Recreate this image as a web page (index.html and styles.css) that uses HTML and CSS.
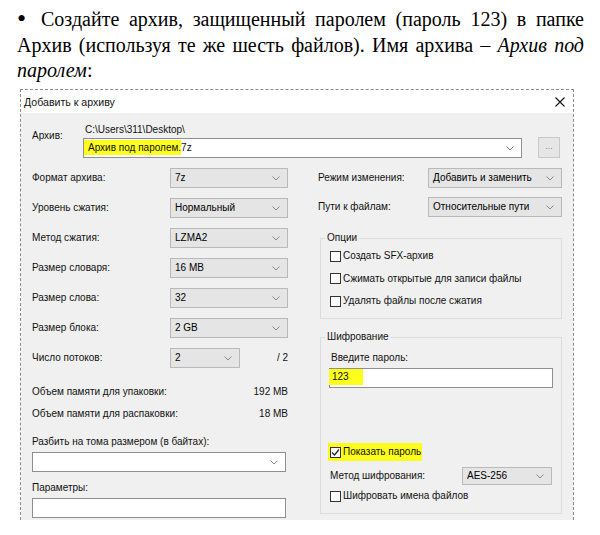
FILE: index.html
```html
<!DOCTYPE html>
<html lang="ru">
<head>
<meta charset="utf-8">
<link rel="stylesheet" href="styles.css">
</head>
<body>
<div class="task">
  <p class="task-text"><span class="bullet">•</span>Создайте архив, защищенный паролем (пароль 123) в папке Архив (используя те же шесть файлов). Имя архива – <i>Архив под паролем</i>:</p>
</div>
<div class="dialog">
  <div class="titlebar">
    <span class="title">Добавить к архиву</span>
    <svg class="close" width="10" height="10" viewBox="0 0 10 10"><path d="M0.5 0.5 L9.5 9.5 M9.5 0.5 L0.5 9.5" stroke="#111" stroke-width="1.1" fill="none"/></svg>
  </div>
  <div class="dlg-body">
    <div class="archive-row">
      <span class="lbl archive-lbl">Архив:</span>
      <div class="archive-field">
        <div class="path">C:\Users\311\Desktop\</div>
        <div class="combo">
          <span class="val"><span class="hl">Архив под паролем.</span>7z</span>
          <svg class="chev" width="8" height="5" viewBox="0 0 8 5"><path d="M0.5 0.5 L4 4 L7.5 0.5" stroke="#777" fill="none"/></svg>
        </div>
      </div>
      <div class="browse">...</div>
    </div>

    <div class="columns">
      <div class="col-left">
        <div class="row"><span class="lbl rl">Формат архива:</span><div class="select"><span class="val">7z</span><svg class="chev" width="8" height="5" viewBox="0 0 8 5"><path d="M0.5 0.5 L4 4 L7.5 0.5" stroke="#888" fill="none"/></svg></div></div>
        <div class="row"><span class="lbl rl">Уровень сжатия:</span><div class="select"><span class="val">Нормальный</span><svg class="chev" width="8" height="5" viewBox="0 0 8 5"><path d="M0.5 0.5 L4 4 L7.5 0.5" stroke="#888" fill="none"/></svg></div></div>
        <div class="row"><span class="lbl rl">Метод сжатия:</span><div class="select"><span class="val">LZMA2</span><svg class="chev" width="8" height="5" viewBox="0 0 8 5"><path d="M0.5 0.5 L4 4 L7.5 0.5" stroke="#888" fill="none"/></svg></div></div>
        <div class="row"><span class="lbl rl">Размер словаря:</span><div class="select"><span class="val">16 MB</span><svg class="chev" width="8" height="5" viewBox="0 0 8 5"><path d="M0.5 0.5 L4 4 L7.5 0.5" stroke="#888" fill="none"/></svg></div></div>
        <div class="row"><span class="lbl rl">Размер слова:</span><div class="select"><span class="val">32</span><svg class="chev" width="8" height="5" viewBox="0 0 8 5"><path d="M0.5 0.5 L4 4 L7.5 0.5" stroke="#888" fill="none"/></svg></div></div>
        <div class="row"><span class="lbl rl">Размер блока:</span><div class="select"><span class="val">2 GB</span><svg class="chev" width="8" height="5" viewBox="0 0 8 5"><path d="M0.5 0.5 L4 4 L7.5 0.5" stroke="#888" fill="none"/></svg></div></div>
        <div class="row"><span class="lbl rl">Число потоков:</span><div class="select small"><span class="val">2</span><svg class="chev" width="8" height="5" viewBox="0 0 8 5"><path d="M0.5 0.5 L4 4 L7.5 0.5" stroke="#888" fill="none"/></svg></div><span class="lbl of">/ 2</span></div>

        <div class="mem first"><span class="lbl">Объем памяти для упаковки:</span><span class="lbl">192 MB</span></div>
        <div class="mem"><span class="lbl">Объем памяти для распаковки:</span><span class="lbl">18 MB</span></div>

        <div class="lbl split-lbl">Разбить на тома размером (в байтах):</div>
        <div class="combo full"><span class="val"></span><svg class="chev" width="8" height="5" viewBox="0 0 8 5"><path d="M0.5 0.5 L4 4 L7.5 0.5" stroke="#888" fill="none"/></svg></div>
        <div class="lbl params-lbl">Параметры:</div>
        <div class="input full"></div>
      </div>

      <div class="col-right">
        <div class="row r"><span class="lbl rr">Режим изменения:</span><div class="select wide"><span class="val">Добавить и заменить</span><svg class="chev" width="8" height="5" viewBox="0 0 8 5"><path d="M0.5 0.5 L4 4 L7.5 0.5" stroke="#888" fill="none"/></svg></div></div>
        <div class="row r2"><span class="lbl rr">Пути к файлам:</span><div class="select wide"><span class="val">Относительные пути</span><svg class="chev" width="8" height="5" viewBox="0 0 8 5"><path d="M0.5 0.5 L4 4 L7.5 0.5" stroke="#888" fill="none"/></svg></div></div>

        <div class="group options">
          <span class="legend">Опции</span>
          <div class="check"><span class="box"></span><span class="lbl">Создать SFX-архив</span></div>
          <div class="check"><span class="box"></span><span class="lbl">Сжимать открытые для записи файлы</span></div>
          <div class="check"><span class="box"></span><span class="lbl">Удалять файлы после сжатия</span></div>
        </div>

        <div class="group crypt">
          <span class="legend">Шифрование</span>
          <div class="lbl pw-lbl">Введите пароль:</div>
          <div class="input pw"><span class="hl pw-val">123</span></div>
          <div class="check show-pw"><span class="hl hl-check"><span class="box"><svg width="9" height="9" viewBox="0 0 9 9"><path d="M1 4.5 L3.5 7 L8 1.5" stroke="#222" stroke-width="1.2" fill="none"/></svg></span><span class="lbl">Показать пароль</span></span></div>
          <div class="row enc"><span class="lbl re">Метод шифрования:</span><div class="select enc-sel"><span class="val">AES-256</span><svg class="chev" width="8" height="5" viewBox="0 0 8 5"><path d="M0.5 0.5 L4 4 L7.5 0.5" stroke="#888" fill="none"/></svg></div></div>
          <div class="check last"><span class="box"></span><span class="lbl">Шифровать имена файлов</span></div>
        </div>
      </div>
    </div>
  </div>
</div>
</body>
</html>
```

FILE: styles.css
```css
html, body {
  margin: 0;
  padding: 0;
  background: #ffffff;
}

body {
  width: 600px;
  height: 535px;
  overflow: hidden;
}

.task {
  height: 89px;
  box-sizing: border-box;
  padding: 7px 16px 0 17px;
}

.task-text {
  margin: 0;
  font-family: "Liberation Serif", "Times New Roman", serif;
  font-size: 20px;
  line-height: 25.5px;
  text-align: justify;
  color: #000;
}

.bullet {
  display: inline-block;
  width: 24px;
  font-size: 26px;
  line-height: 20px;
  vertical-align: top;
  margin-top: 2px;
}

.dialog {
  margin-left: 20px;
  width: 554px;
  height: 431px;
  box-sizing: border-box;
  border: 1px dashed #8a8a8a;
  border-bottom: none;
  overflow: hidden;
  font-family: "Liberation Sans", Arial, sans-serif;
  font-size: 10px;
  color: #111;
}

.titlebar {
  height: 23px;
  background: #fff;
  display: flex;
  align-items: center;
  justify-content: space-between;
  padding: 0 8px 0 3px;
}

.title {
  font-size: 10.6px;
  color: #111;
}

.dlg-body {
  background: #f0f0f0;
  height: 407px;
  padding: 10px 13px 0 11px;
  box-sizing: border-box;
}

.lbl {
  line-height: 16px;
  white-space: nowrap;
}

.archive-row {
  display: flex;
  align-items: flex-start;
}

.archive-lbl {
  width: 51px;
  flex: none;
  margin-top: 5px;
}

.archive-field {
  width: 439px;
}

.path {
  line-height: 14px;
  padding-left: 2px;
}

.combo, .input, .select {
  height: 20px;
  box-sizing: border-box;
  display: flex;
  align-items: center;
  justify-content: space-between;
  padding: 0 7px 0 4px;
  line-height: 16px;
}

.combo {
  margin-top: 1px;
  background: #fff;
  border: 1px solid #8f8f8f;
}

.combo .val {
  padding-left: 1px;
}

.hl {
  background: #fdfd1e;
}

.combo .hl {
  padding: 2px 0 2px 4px;
  margin-left: -5px;
}

.browse {
  margin-left: 16px;
  margin-top: 14px;
  width: 22px;
  height: 21px;
  box-sizing: border-box;
  border: 1px solid #c8c8c8;
  background: #e6e6e6;
  color: #888;
  font-size: 9px;
  text-align: center;
  line-height: 16px;
}

.chev {
  flex: none;
}

.columns {
  display: flex;
  margin-top: 10px;
  gap: 30px;
}

.col-left {
  width: 256px;
  flex: none;
}

.col-right {
  width: 244px;
  flex: none;
}

.row {
  display: flex;
  align-items: center;
  height: 20px;
  margin-bottom: 10px;
}

.rl {
  width: 138px;
  flex: none;
}

.select {
  width: 118px;
  background: #e5e5e5;
  border: 1px solid #b9b9b9;
  color: #000;
}

.select.small {
  width: 70px;
}

.of {
  margin-left: auto;
}

.mem {
  display: flex;
  justify-content: space-between;
  margin-top: 6px;
}

.mem.first {
  margin-top: 16px;
}

.split-lbl {
  margin-top: 12px;
}

.full {
  width: 254px;
  margin-top: 2px;
}

.input {
  background: #fff;
  border: 1px solid #8f8f8f;
}

.params-lbl {
  margin-top: 8px;
}

.rr {
  width: 110px;
  flex: none;
}

.select.wide {
  width: 134px;
}

.row.r2 {
  margin-top: -1px;
}

.group {
  position: relative;
  margin-left: 2px;
  width: 242px;
  box-sizing: border-box;
  border: 1px solid #dcdcdc;
  padding: 0 0 0 9px;
}

.legend {
  position: absolute;
  top: -9px;
  left: 4px;
  padding: 0 2px;
  background: #f0f0f0;
  line-height: 16px;
}

.options {
  margin-top: 21px;
  height: 81px;
  padding-top: 9px;
}

.check {
  display: flex;
  align-items: center;
  height: 16px;
  margin-bottom: 6.5px;
}

.box {
  width: 11px;
  height: 11px;
  box-sizing: border-box;
  border: 1px solid #333;
  background: #fff;
  margin-right: 2px;
  flex: none;
  display: flex;
  align-items: center;
  justify-content: center;
}

.crypt {
  margin-top: 18px;
  height: 177px;
  padding-top: 12px;
}

.pw-lbl {
  padding-left: 1px;
}

.input.pw {
  width: 224px;
  margin-top: 2px;
  margin-left: -1px;
  padding-left: 3px;
}

.pw-val {
  padding: 0 14px 0 3px;
  margin-left: -4px;
  line-height: 16px;
  align-self: flex-start;
}

.show-pw {
  margin-top: 55px;
  margin-left: -2px;
  height: 18px;
  margin-bottom: 6px;
}

.hl-check {
  display: flex;
  align-items: center;
  height: 18px;
  padding: 0 1px 0 2px;
}

.row.enc {
  height: 18px;
  margin-bottom: 3px;
}

.re {
  width: 132px;
  flex: none;
}

.select.enc-sel {
  width: 90px;
  height: 18px;
}

.check.last {
  margin-bottom: 0;
}
```
